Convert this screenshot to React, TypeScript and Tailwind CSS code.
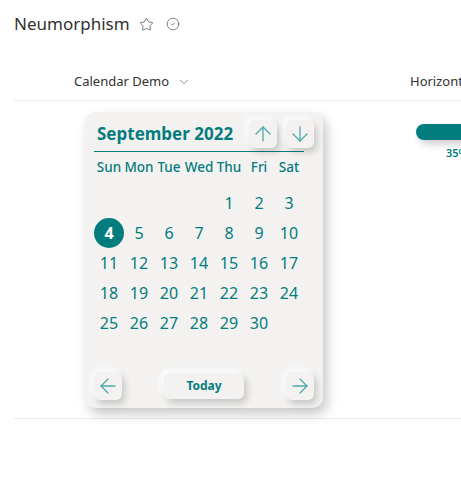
import { ArrowUp, ArrowDown, ArrowLeft, ArrowRight, ChevronDown, Star, CircleCheck } from 'lucide-react';

const TEAL = 'text-[#037c7e]';
const days = ['Sun', 'Mon', 'Tue', 'Wed', 'Thu', 'Fri', 'Sat'];

const cells: (number | null)[] = [
  null, null, null, null, 1, 2, 3,
  ...Array.from({ length: 30 - 3 }, (_, i) => i + 4),
];

function NeuButton({ children, className }: { children: React.ReactNode; className: string }) {
  return (
    <button
      className={`flex items-center justify-center rounded-[6px] bg-[#f3f2f1] shadow-[3px_4px_7px_rgba(0,0,0,0.18),-3px_-3px_6px_rgba(255,255,255,0.9)] ${className}`}
    >
      {children}
    </button>
  );
}

function Calendar() {
  return (
    <div className="flex h-[296px] w-[238px] flex-col rounded-[10px] bg-[#f3f2f1] px-[9px] pt-[8px] pb-[8px] shadow-[4px_6px_12px_rgba(0,0,0,0.22)]">
      <div className="flex w-[210px] items-center border-b-[1.5px] border-[#037c7e] pb-[3px]">
        <div className={`pl-[3px] text-[17px] font-bold ${TEAL}`}>September 2022</div>
        <div className="-mr-[10px] ml-auto flex gap-[9px]">
          <NeuButton className="h-[28px] w-[28px]">
            <ArrowUp size={24} strokeWidth={1.3} className="text-[#4ea9aa]" />
          </NeuButton>
          <NeuButton className="h-[28px] w-[28px]">
            <ArrowDown size={24} strokeWidth={1.3} className="text-[#4ea9aa]" />
          </NeuButton>
        </div>
      </div>
      <div className="grid w-[210px] grid-cols-7 pt-[5px]">
        {days.map((d) => (
          <div key={d} className={`text-center text-[13.5px] font-medium leading-[20px] ${TEAL}`}>
            {d}
          </div>
        ))}
      </div>
      <div className="grid w-[210px] grid-cols-7 pt-[11px]">
        {cells.map((n, i) => (
          <div key={i} className="flex h-[30px] items-center justify-center">
            {n === 4 ? (
              <div className="flex h-[30px] w-[30px] items-center justify-center rounded-full bg-[#037c7e] text-[16px] font-bold text-white">
                4
              </div>
            ) : (
              <span className={`text-[16px] ${TEAL}`}>{n ?? ''}</span>
            )}
          </div>
        ))}
      </div>
      <div className="mt-auto flex items-center">
        <NeuButton className="h-[28px] w-[28px]">
          <ArrowLeft size={24} strokeWidth={1.3} className="text-[#4ea9aa]" />
        </NeuButton>
        <NeuButton className="ml-[42px] h-[26px] w-[80px]">
          <span className={`text-[12px] font-bold ${TEAL}`}>Today</span>
        </NeuButton>
        <NeuButton className="ml-[42px] h-[28px] w-[28px]">
          <ArrowRight size={24} strokeWidth={1.3} className="text-[#4ea9aa]" />
        </NeuButton>
      </div>
    </div>
  );
}

export default function App() {
  return (
    <div className="min-h-screen overflow-hidden bg-white pl-[14px] text-[#323130]" style={{ fontFamily: '"Noto Sans", "Open Sans", sans-serif' }}>
      <div className="flex items-center pt-[12px]">
        <h1 className="text-[17px] leading-[24px]">Neumorphism</h1>
        <Star size={15} strokeWidth={1.3} className="ml-[9px] text-[#605e5c]" />
        <CircleCheck size={14} strokeWidth={1.3} className="ml-[12px] text-[#605e5c]" />
      </div>

      <div className="mt-[28px] flex h-[37px] items-center border-b border-[#edebe9] text-[13px]">
        <div className="flex w-[396px] shrink-0 items-center pl-[60px]">
          <span>Calendar Demo</span>
          <ChevronDown size={14} strokeWidth={1.3} className="ml-[8px] text-[#605e5c]" />
        </div>
        <div className="whitespace-nowrap">Horizontal</div>
      </div>

      <div className="flex border-b border-[#edebe9]">
        <div className="w-[402px] shrink-0 pt-[11px] pb-[10px] pl-[71px]">
          <Calendar />
        </div>
        <div className="shrink-0 pt-[23px]">
          <div className="h-[16px] w-[120px] rounded-full bg-[#037c7e] shadow-[3px_4px_8px_rgba(0,0,0,0.2)]" />
          <div className={`pt-[5px] pl-[30px] text-[11px] font-semibold ${TEAL}`}>35%</div>
        </div>
      </div>
    </div>
  );
}
